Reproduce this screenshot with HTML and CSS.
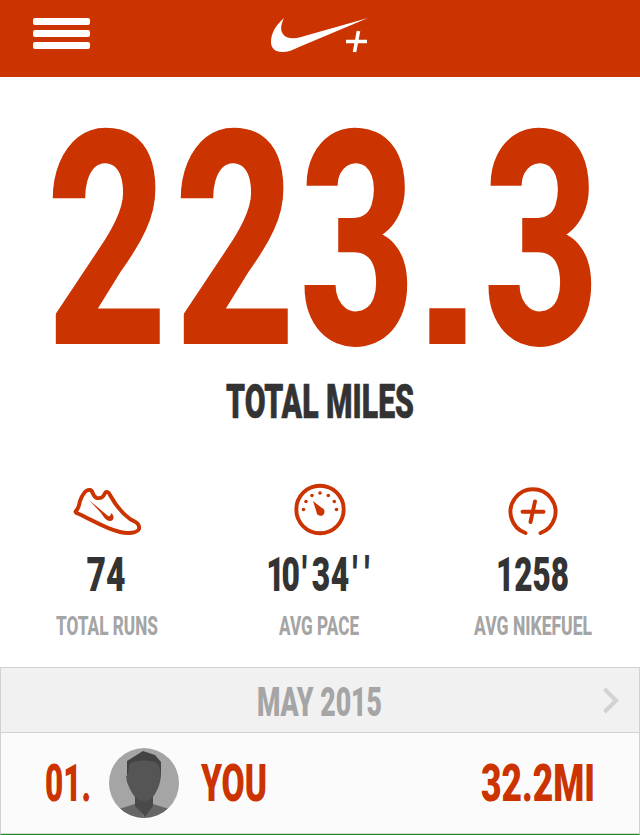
FILE: index.html
```
<!DOCTYPE html>
<html lang="en">
<head>
    <meta charset="UTF-8">
    <meta name="viewport" content="width=device-width, initial-scale=1.0">
    <title>Nike+ Running</title>
    <link rel="stylesheet" href="styles.css">
</head>
<body>

<header class="topbar">
    <button class="menu" aria-label="Menu">
        <span></span>
        <span></span>
        <span></span>
    </button>
    <svg class="logo" width="100" height="40" viewBox="270 15 100 40">
        <path d="M284 18C276 25 271 33 271 42C271 48 275 52 282 52C288 52 293 50 299 47L368 18L301 37C294 39 286 39 283 34C280 30 281 24 284 18Z"/>
        <path d="M358.500 31L354.500 52M346 41.500H367" class="logo-plus"/>
    </svg>
</header>

<main>
    <section class="total">
        <svg class="big" width="640" height="240" viewBox="0 0 640 240">
            <g class="big-text">
                <text x="46" y="230" textLength="122" lengthAdjust="spacingAndGlyphs">2</text>
                <text x="174" y="230" textLength="122" lengthAdjust="spacingAndGlyphs">2</text>
                <text x="299" y="230" textLength="117" lengthAdjust="spacingAndGlyphs">3</text>
                <text class="dot" x="412" y="230" textLength="71" lengthAdjust="spacingAndGlyphs">.</text>
                <text x="483" y="230" textLength="117" lengthAdjust="spacingAndGlyphs">3</text>
            </g>
        </svg>
        <svg class="caption" width="640" height="50" viewBox="0 0 640 50">
            <text x="320" y="44" textLength="188" lengthAdjust="spacingAndGlyphs">TOTAL MILES</text>
        </svg>
    </section>

    <section class="stats">
        <div class="stat">
            <svg class="icon" width="70" height="54" viewBox="72 483 70 54">
                <path d="M76 511C79 508 79 505 80 501C82 495 86 489 90 490C94 491 92 497 97 498C103 499 104 495 105 493C106 491 109 492 110 495C115 504 123 514 130 519C135 522 140 523 139 529C137 533 128 534 120 532C106 529 92 520 79 514C76 513 75 512 76 511Z"/>
                <path class="solid" d="M89 500L108 516C110 517 111 515 111 513C115 516 114 521 110 521C106 521 103 516 101 513Z"/>
            </svg>
            <svg class="value" width="200" height="44" viewBox="0 0 200 44">
                <text x="99" y="40" textLength="39" lengthAdjust="spacingAndGlyphs">74</text>
            </svg>
            <svg class="label" width="200" height="24" viewBox="0 0 200 24">
                <text x="100" y="21" textLength="102" lengthAdjust="spacingAndGlyphs">TOTAL RUNS</text>
            </svg>
        </div>
        <div class="stat">
            <svg class="icon" width="54" height="54" viewBox="293.500 483 54 54">
                <circle cx="320.500" cy="509.500" r="23.700"/>
                <g class="solid">
                    <circle cx="304" cy="509.500" r="1.800"/>
                    <circle cx="306.500" cy="501.500" r="1.800"/>
                    <circle cx="312.500" cy="495.500" r="1.800"/>
                    <circle cx="320.500" cy="493" r="1.800"/>
                    <circle cx="328.800" cy="495.500" r="1.800"/>
                    <circle cx="334.800" cy="501.500" r="1.800"/>
                    <circle cx="337" cy="509.500" r="1.800"/>
                    <path d="M313.500 501L322.500 508A4 4 0 1 1 317 512Z"/>
                </g>
            </svg>
            <svg class="value pace" width="200" height="44" viewBox="0 0 200 44">
                <text transform="scale(.65 1)" x="71 94.500 126 141 170.500 204 222.500" y="40">10'34''</text>
            </svg>
            <svg class="label" width="200" height="24" viewBox="0 0 200 24">
                <text x="99" y="21" textLength="80" lengthAdjust="spacingAndGlyphs">AVG PACE</text>
            </svg>
        </div>
        <div class="stat">
            <svg class="icon" width="54" height="54" viewBox="506.500 483 54 54">
                <path d="M526 533A22.500 22.500 0 1 1 541 533"/>
                <path d="M535.500 501.500L531 522M523 511.700H544"/>
            </svg>
            <svg class="value" width="200" height="44" viewBox="0 0 200 44">
                <text x="99.500" y="40" textLength="73" lengthAdjust="spacingAndGlyphs">1258</text>
            </svg>
            <svg class="label" width="200" height="24" viewBox="0 0 200 24">
                <text x="100" y="21" textLength="118" lengthAdjust="spacingAndGlyphs">AVG NIKEFUEL</text>
            </svg>
        </div>
    </section>

    <section class="board">
        <div class="month">
            <svg class="month-name" width="130" height="40" viewBox="0 0 130 40">
                <text x="64.500" y="36" textLength="125" lengthAdjust="spacingAndGlyphs">MAY 2015</text>
            </svg>
            <svg class="chevron" width="18" height="28" viewBox="0 0 18 28">
                <path d="M1.500 3L13 14.500L1.500 26"/>
            </svg>
        </div>
        <div class="row">
            <svg class="rank" width="46" height="46" viewBox="0 0 46 46">
                <text x="0" y="41" textLength="46" lengthAdjust="spacingAndGlyphs">01.</text>
            </svg>
            <svg class="avatar" width="70" height="70" viewBox="0 0 70 70">
                <clipPath id="round"><circle cx="35" cy="35" r="35"/></clipPath>
                <g clip-path="url(#round)">
                    <rect width="70" height="70" fill="#a5a5a5"/>
                    <path d="M0 64L26 56L35 69L44 56L70 64V70H0Z" fill="#666"/>
                    <path d="M26 48H44V58L36 69L26 58Z" fill="#4a4a4a"/>
                    <path d="M18 27V13L34 3L46 7L52 14V28Z" fill="#434343"/>
                    <path d="M20 17C24 11 46 11 50 17L52 28L51 34C48 45 43 53 35 53C27 53 22 45 18 34L17 28L19 27Z" fill="#555"/>
                </g>
            </svg>
            <svg class="name" width="68" height="46" viewBox="0 0 68 46">
                <text x="0" y="41" textLength="66" lengthAdjust="spacingAndGlyphs">YOU</text>
            </svg>
            <svg class="miles" width="116" height="46" viewBox="0 0 116 46">
                <text x="1" y="41" textLength="114" lengthAdjust="spacingAndGlyphs">32.2MI</text>
            </svg>
        </div>
    </section>
</main>

</body>
</html>
```
FILE: styles.css
```
/* General */
body {
    margin: 0;
    background: #fff;
    font-family: Roboto, sans-serif;
    font-weight: 900;
    height: 835px;
    overflow: hidden;
}

svg {
    display: block;
    overflow: visible;
}

/* Top bar */
.topbar {
    box-sizing: border-box;
    height: 77px;
    background: #cb3301;
    display: grid;
    grid-template-columns: 1fr auto 1fr;
    align-items: start;
    padding: 15px 33px 0;
}

.menu {
    display: flex;
    flex-direction: column;
    gap: 5px;
    width: 57px;
    padding: 3px 0 0;
    border: none;
    background: none;
}

.menu span {
    height: 7px;
    width: 57px;
    border-radius: 2px;
    background: #fff;
}

.logo {
    fill: #fff;
}

.logo-plus {
    fill: none;
    stroke: #fff;
    stroke-width: 3.6;
}

/* Total distance */
.total {
    padding-top: 37px;
}

.big-text {
    font-size: 300px;
    font-weight: 800;
    fill: #cb3301;
}

.big-text .dot {
    font-family: "Liberation Sans", sans-serif;
    font-size: 240px;
}

.caption {
    margin-top: 20px;
    font-size: 49px;
    fill: #333;
    stroke: #333;
    stroke-width: 0.6;
    text-anchor: middle;
}

/* Stats */
.stats {
    display: grid;
    grid-template-columns: repeat(3, 1fr);
    padding-top: 59px;
    height: 184px;
    box-sizing: border-box;
}

.stat {
    display: flex;
    flex-direction: column;
    align-items: center;
}

.icon {
    fill: none;
    stroke: #cb3301;
    stroke-width: 3.9;
    stroke-linecap: round;
    stroke-linejoin: round;
}

.icon .solid {
    fill: #cb3301;
    stroke: none;
}

.value {
    margin-top: 14px;
    font-size: 49px;
    fill: #333;
    text-anchor: middle;
}

.pace {
    text-anchor: start;
}

.label {
    margin-top: 19px;
    font-weight: 800;
    font-size: 25px;
    fill: #a5a5a5;
    text-anchor: middle;
}

/* Leaderboard */
.board {
    box-sizing: border-box;
    height: 168px;
    margin-top: 59px;
    border: 1px solid #d2d2d2;
    border-bottom-color: #1c8a1c;
}

.month {
    height: 64px;
    display: grid;
    grid-template-columns: 1fr auto 1fr;
    align-items: center;
    padding-right: 18px;
    padding-left: 18px;
    background: #f1f1f1;
    border-bottom: 1px solid #d2d2d2;
}

.month-name {
    grid-column: 2;
    font-size: 41px;
    fill: #a5a5a5;
    text-anchor: middle;
}

.chevron {
    justify-self: end;
    fill: none;
    stroke: #d2d2d2;
    stroke-width: 4;
}

.row {
    height: 100px;
    display: flex;
    align-items: center;
    padding: 0 43px 0 44px;
    background: #fbfbfb;
    border-bottom: 1px solid #d8dcd8;
    font-size: 51px;
    fill: #cb3301;
}

.avatar {
    margin-left: 18px;
}

.name {
    margin-left: 22px;
}

.miles {
    margin-left: auto;
}
```
